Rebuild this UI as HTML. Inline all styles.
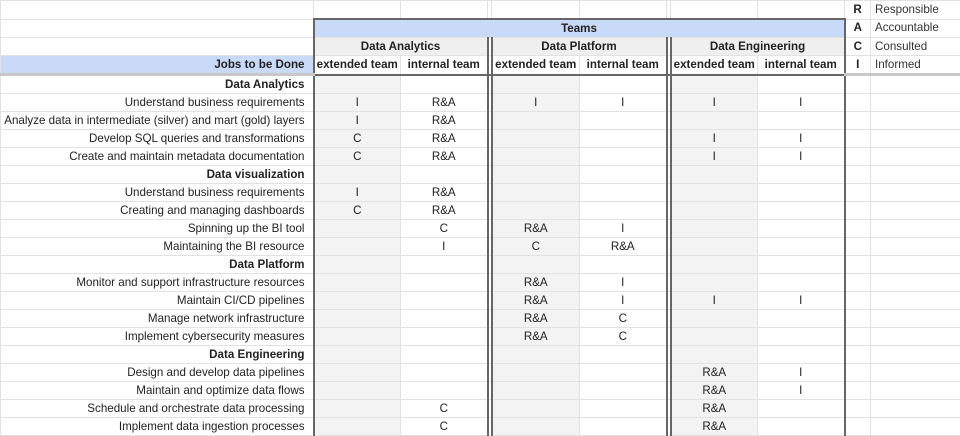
<!DOCTYPE html>
<html><head><meta charset="utf-8"><style>
body{margin:0;background:#fff;font-family:"Liberation Sans",Arial,sans-serif;font-size:11.6px;color:#222}
table{border-collapse:collapse;table-layout:fixed;width:960px}
td{border:1px solid #e2e2e2;height:17px;padding:0 2px;white-space:nowrap;overflow:hidden;text-align:center;line-height:16px}
td.a{text-align:right;padding-right:8px}
tr.s td.a{font-weight:bold}
.g{background:#f3f3f3}
.L{border-left:2px solid #666}
.R{border-right:2px solid #666}
.h{font-weight:bold}
tr.fz td{border-bottom:3px solid #c8c8c8}
tr.fz td.bt{border-bottom:2px solid #666}
.lg{text-align:left;color:#333;padding-left:4px}
</style></head><body>
<table>
<colgroup><col style="width:313px"><col style="width:87px"><col style="width:87px"><col style="width:4px"><col style="width:88px"><col style="width:87px"><col style="width:4px"><col style="width:87px"><col style="width:87px"><col style="width:26px"><col style="width:90px"></colgroup>
<tr><td style="height:15px"></td><td></td><td></td><td></td><td></td><td></td><td></td><td></td><td style="border-bottom:2px solid #666"></td><td class="h">R</td><td class="lg">Responsible</td></tr>
<tr><td style="height:15px"></td><td colspan="8" class="h L R" style="background:#c9daf8;border-top:2px solid #666">Teams</td><td class="h">A</td><td class="lg">Accountable</td></tr>
<tr><td style="height:15px"></td><td colspan="2" class="h L R" style="background:#efefef">Data Analytics</td><td class="R"></td><td colspan="2" class="h L R" style="background:#efefef">Data Platform</td><td class="R"></td><td colspan="2" class="h L R" style="background:#efefef">Data Engineering</td><td class="h">C</td><td class="lg">Consulted</td></tr>
<tr class="fz"><td class="a h" style="background:#c9daf8;height:15px">Jobs to be Done</td><td class="h L bt">extended team</td><td class="h R bt">internal team</td><td class="R bt"></td><td class="h bt">extended team</td><td class="h R bt">internal team</td><td class="R bt"></td><td class="h bt">extended team</td><td class="h R bt">internal team</td><td class="h">I</td><td class="lg">Informed</td></tr>
<tr class="s"><td class="a">Data Analytics</td><td class="g L"></td><td class="R"></td><td class="R"></td><td class="g"></td><td class="R"></td><td class="R"></td><td class="g"></td><td class="R"></td><td></td><td></td></tr>
<tr><td class="a">Understand business requirements</td><td class="g L">I</td><td class="R">R&amp;A</td><td class="R"></td><td class="g">I</td><td class="R">I</td><td class="R"></td><td class="g">I</td><td class="R">I</td><td></td><td></td></tr>
<tr><td class="a">Analyze data in intermediate (silver) and mart (gold) layers</td><td class="g L">I</td><td class="R">R&amp;A</td><td class="R"></td><td class="g"></td><td class="R"></td><td class="R"></td><td class="g"></td><td class="R"></td><td></td><td></td></tr>
<tr><td class="a">Develop SQL queries and transformations</td><td class="g L">C</td><td class="R">R&amp;A</td><td class="R"></td><td class="g"></td><td class="R"></td><td class="R"></td><td class="g">I</td><td class="R">I</td><td></td><td></td></tr>
<tr><td class="a">Create and maintain metadata documentation</td><td class="g L">C</td><td class="R">R&amp;A</td><td class="R"></td><td class="g"></td><td class="R"></td><td class="R"></td><td class="g">I</td><td class="R">I</td><td></td><td></td></tr>
<tr class="s"><td class="a">Data visualization</td><td class="g L"></td><td class="R"></td><td class="R"></td><td class="g"></td><td class="R"></td><td class="R"></td><td class="g"></td><td class="R"></td><td></td><td></td></tr>
<tr><td class="a">Understand business requirements</td><td class="g L">I</td><td class="R">R&amp;A</td><td class="R"></td><td class="g"></td><td class="R"></td><td class="R"></td><td class="g"></td><td class="R"></td><td></td><td></td></tr>
<tr><td class="a">Creating and managing dashboards</td><td class="g L">C</td><td class="R">R&amp;A</td><td class="R"></td><td class="g"></td><td class="R"></td><td class="R"></td><td class="g"></td><td class="R"></td><td></td><td></td></tr>
<tr><td class="a">Spinning up the BI tool</td><td class="g L"></td><td class="R">C</td><td class="R"></td><td class="g">R&amp;A</td><td class="R">I</td><td class="R"></td><td class="g"></td><td class="R"></td><td></td><td></td></tr>
<tr><td class="a">Maintaining the BI resource</td><td class="g L"></td><td class="R">I</td><td class="R"></td><td class="g">C</td><td class="R">R&amp;A</td><td class="R"></td><td class="g"></td><td class="R"></td><td></td><td></td></tr>
<tr class="s"><td class="a">Data Platform</td><td class="g L"></td><td class="R"></td><td class="R"></td><td class="g"></td><td class="R"></td><td class="R"></td><td class="g"></td><td class="R"></td><td></td><td></td></tr>
<tr><td class="a">Monitor and support infrastructure resources</td><td class="g L"></td><td class="R"></td><td class="R"></td><td class="g">R&amp;A</td><td class="R">I</td><td class="R"></td><td class="g"></td><td class="R"></td><td></td><td></td></tr>
<tr><td class="a">Maintain CI/CD pipelines</td><td class="g L"></td><td class="R"></td><td class="R"></td><td class="g">R&amp;A</td><td class="R">I</td><td class="R"></td><td class="g">I</td><td class="R">I</td><td></td><td></td></tr>
<tr><td class="a">Manage network infrastructure</td><td class="g L"></td><td class="R"></td><td class="R"></td><td class="g">R&amp;A</td><td class="R">C</td><td class="R"></td><td class="g"></td><td class="R"></td><td></td><td></td></tr>
<tr><td class="a">Implement cybersecurity measures</td><td class="g L"></td><td class="R"></td><td class="R"></td><td class="g">R&amp;A</td><td class="R">C</td><td class="R"></td><td class="g"></td><td class="R"></td><td></td><td></td></tr>
<tr class="s"><td class="a">Data Engineering</td><td class="g L"></td><td class="R"></td><td class="R"></td><td class="g"></td><td class="R"></td><td class="R"></td><td class="g"></td><td class="R"></td><td></td><td></td></tr>
<tr><td class="a">Design and develop data pipelines</td><td class="g L"></td><td class="R"></td><td class="R"></td><td class="g"></td><td class="R"></td><td class="R"></td><td class="g">R&amp;A</td><td class="R">I</td><td></td><td></td></tr>
<tr><td class="a">Maintain and optimize data flows</td><td class="g L"></td><td class="R"></td><td class="R"></td><td class="g"></td><td class="R"></td><td class="R"></td><td class="g">R&amp;A</td><td class="R">I</td><td></td><td></td></tr>
<tr><td class="a">Schedule and orchestrate data processing</td><td class="g L"></td><td class="R">C</td><td class="R"></td><td class="g"></td><td class="R"></td><td class="R"></td><td class="g">R&amp;A</td><td class="R"></td><td></td><td></td></tr>
<tr><td class="a">Implement data ingestion processes</td><td class="g L"></td><td class="R">C</td><td class="R"></td><td class="g"></td><td class="R"></td><td class="R"></td><td class="g">R&amp;A</td><td class="R"></td><td></td><td></td></tr>
</table>
</body></html>
